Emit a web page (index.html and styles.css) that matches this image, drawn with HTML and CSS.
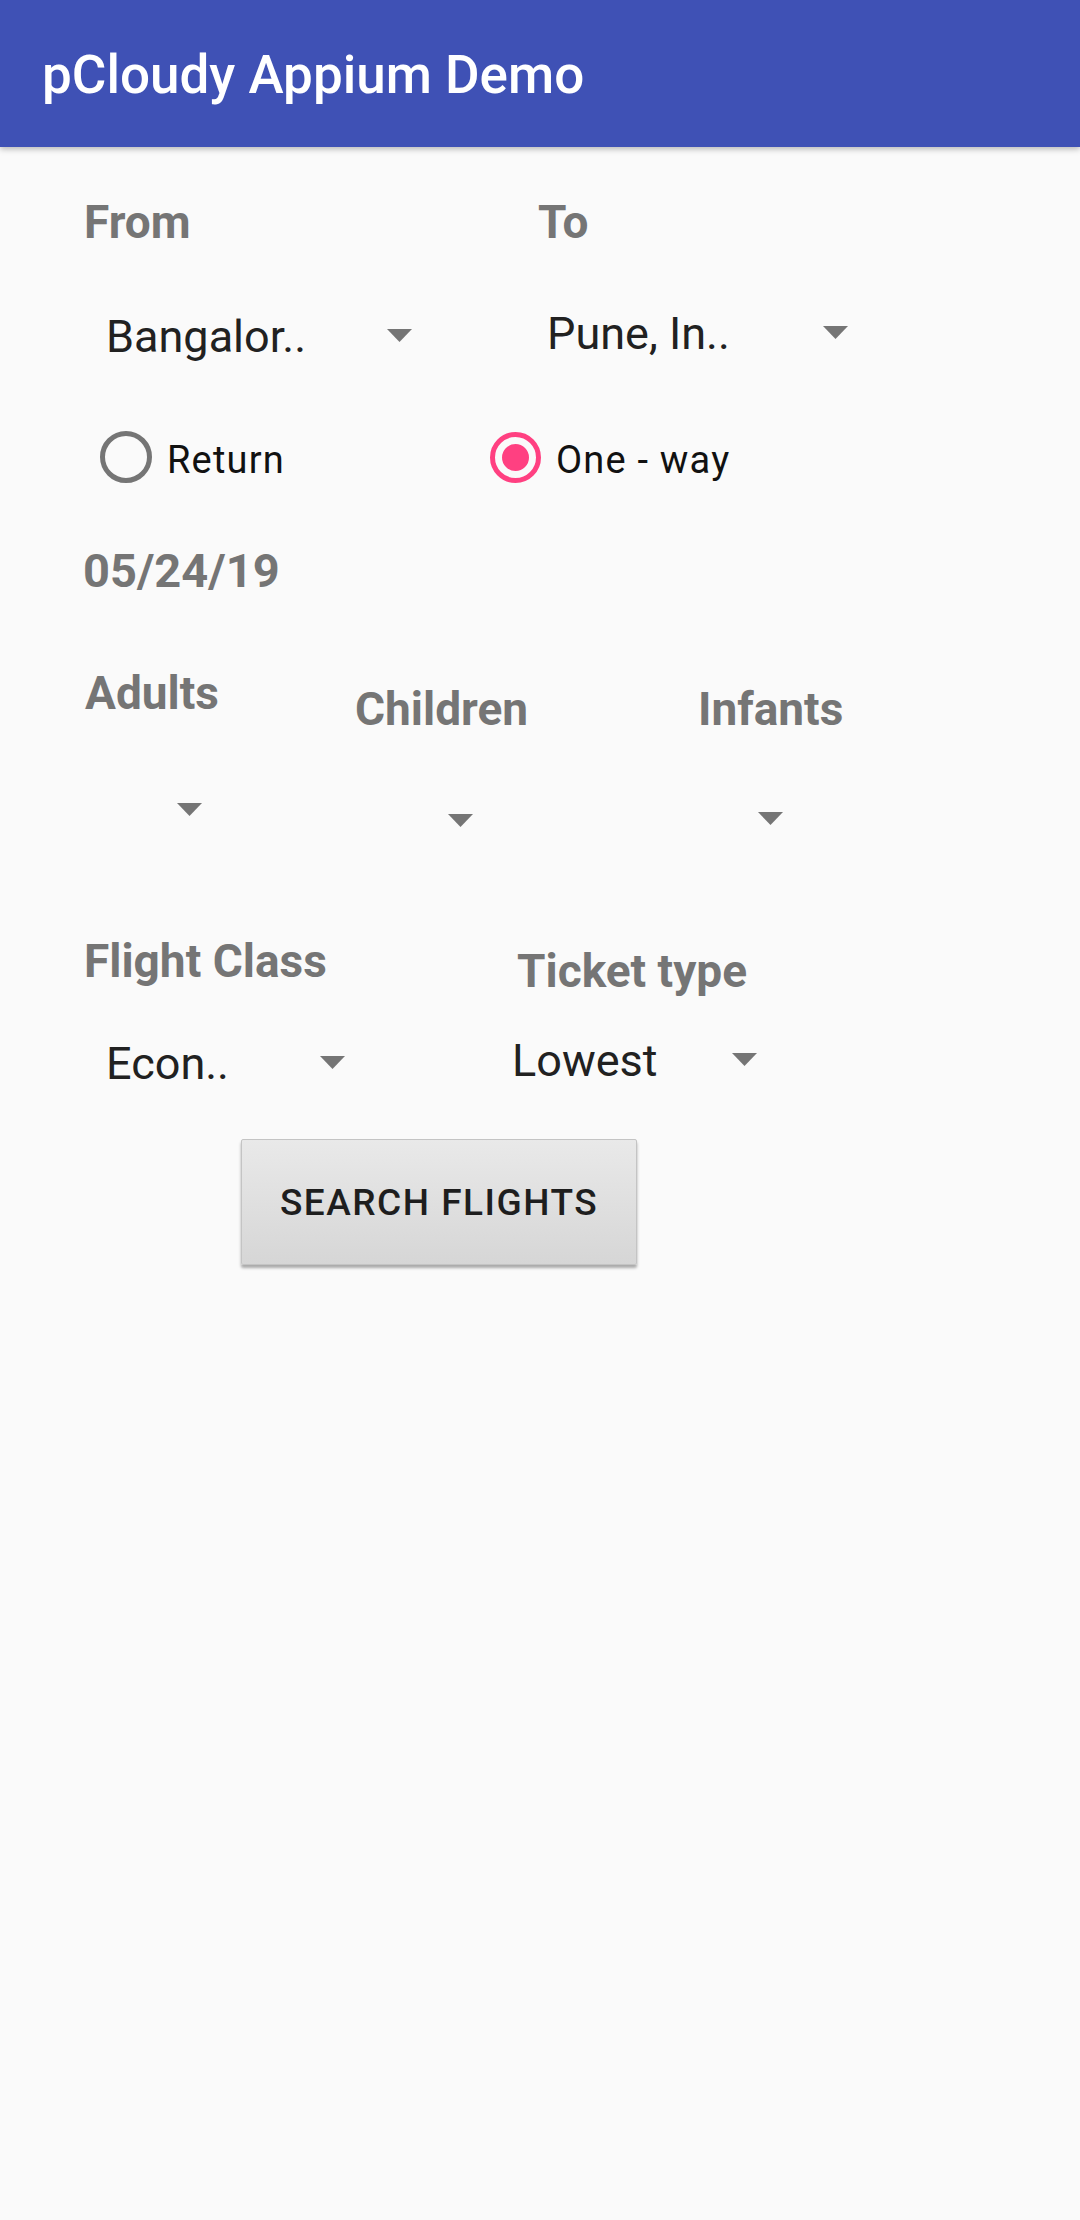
FILE: index.html
```html
<!DOCTYPE html>
<html>
<head>
<meta charset="utf-8">
<link rel="stylesheet" href="styles.css">
</head>
<body>
<div class="appbar"><span class="title">pCloudy Appium Demo</span></div>
<main class="form">
  <div class="row row-labels1">
    <div class="cell c-from label">From</div>
    <div class="cell label">To</div>
  </div>
  <div class="row row-spin1">
    <div class="cell spinner c-bang off3">
      <span class="spin-text w-bang">Bangalor..</span>
      <svg class="arrow" width="25" height="13" viewBox="0 0 25 13"><polygon points="0,0 25,0 12.5,13"/></svg>
    </div>
    <div class="cell spinner">
      <span class="spin-text w-pune">Pune, In..</span>
      <svg class="arrow" width="25" height="13" viewBox="0 0 25 13"><polygon points="0,0 25,0 12.5,13"/></svg>
    </div>
  </div>
  <div class="row row-radio">
    <div class="radio-item c-return">
      <span class="radio"></span>
      <span class="radio-text">Return</span>
    </div>
    <div class="radio-item">
      <span class="radio checked"><span class="dot"></span></span>
      <span class="radio-text">One - way</span>
    </div>
  </div>
  <div class="row row-date">
    <div class="cell label date">05/24/19</div>
  </div>
  <div class="row row-pax">
    <div class="cell label c-adults">Adults</div>
    <div class="cell label c-children off16">Children</div>
    <div class="cell label off16">Infants</div>
  </div>
  <div class="row row-paxspin">
    <div class="cell c-a-arrow"><svg class="arrow-only" width="25" height="13" viewBox="0 0 25 13"><polygon points="0,0 25,0 12.5,13"/></svg></div>
    <div class="cell c-c-arrow off11"><svg class="arrow-only" width="25" height="13" viewBox="0 0 25 13"><polygon points="0,0 25,0 12.5,13"/></svg></div>
    <div class="cell off9"><svg class="arrow-only" width="25" height="13" viewBox="0 0 25 13"><polygon points="0,0 25,0 12.5,13"/></svg></div>
  </div>
  <div class="row row-labels3">
    <div class="cell label c-class">Flight Class</div>
    <div class="cell label off10">Ticket type</div>
  </div>
  <div class="row row-spin2">
    <div class="cell spinner c-econ off3">
      <span class="spin-text w-econ">Econ..</span>
      <svg class="arrow" width="25" height="13" viewBox="0 0 25 13"><polygon points="0,0 25,0 12.5,13"/></svg>
    </div>
    <div class="cell spinner">
      <span class="spin-text w-low">Lowest</span>
      <svg class="arrow" width="25" height="13" viewBox="0 0 25 13"><polygon points="0,0 25,0 12.5,13"/></svg>
    </div>
  </div>
  <div class="row row-button">
    <button class="search-btn">SEARCH FLIGHTS</button>
  </div>
</main>
</body>
</html>
```

FILE: styles.css
```css
* { box-sizing: border-box; }
html, body { margin: 0; padding: 0; }
body {
  width: 1080px;
  height: 2220px;
  background: #fafafa;
  font-family: Roboto, "Noto Sans", sans-serif;
  overflow: hidden;
}
.appbar {
  position: relative;
  height: 147px;
  background: #3f51b5;
  padding: 3px 0 0 42px;
  box-shadow: 0 2px 6px rgba(0,0,0,0.28);
  z-index: 1;
}
.title {
  color: #fff;
  font-size: 53px;
  font-weight: 500;
  line-height: 144px;
  display: block;
}
.form { display: block; }
.row { display: flex; align-items: flex-start; }
.cell { flex: none; }
.label {
  font-size: 46px;
  font-weight: 700;
  color: #757575;
  line-height: 56px;
  white-space: nowrap;
}
.label.date { font-size: 47px; }
.off3 { padding-top: 3px; }
.off9 { padding-top: 9px; }
.off10 { padding-top: 10px; }
.off11 { padding-top: 11px; }
.off16 { padding-top: 16px; }

.row-labels1 { margin-top: 47px; padding-left: 84px; height: 56px; }
.c-from { width: 454px; }

.spinner { display: flex; align-items: flex-start; }
.spin-text {
  font-size: 45px;
  line-height: 56px;
  color: #212121;
  white-space: nowrap;
  flex: none;
}
.arrow { margin-top: 20px; fill: #757575; flex: none; display: block; }
.arrow-only { fill: #757575; display: block; }

.row-spin1 { margin-top: 56px; padding-left: 106px; height: 60px; }
.c-bang { width: 441px; }
.w-bang { width: 281px; }
.w-pune { width: 276px; }

.row-radio { margin-top: 65px; padding-left: 100px; height: 54px; }
.radio-item { display: flex; align-items: flex-start; flex: none; }
.c-return { width: 390px; }
.radio {
  width: 52px;
  height: 52px;
  border-radius: 50%;
  border: 5px solid #757575;
  display: flex;
  align-items: center;
  justify-content: center;
  flex: none;
}
.radio.checked { border-color: #ff4081; margin-top: 1px; width: 51px; height: 51px; }
.dot { width: 27px; height: 27px; border-radius: 50%; background: #ff4081; }
.radio-text {
  font-size: 38px;
  letter-spacing: 1.2px;
  line-height: 52px;
  padding-top: 3px;
  margin-left: 15px;
  color: #111;
  white-space: nowrap;
}

.row-date { margin-top: 58px; padding-left: 83px; height: 56px; }

.row-pax { margin-top: 66px; padding-left: 85px; height: 72px; }
.c-adults { width: 270px; }
.c-children { width: 343px; }

.row-paxspin { margin-top: 66px; padding-left: 177px; height: 25px; }
.c-a-arrow { width: 271px; }
.c-c-arrow { width: 310px; }

.row-labels3 { margin-top: 105px; padding-left: 84px; height: 66px; }
.c-class { width: 433px; }

.row-spin2 { margin-top: 34px; padding-left: 106px; height: 60px; }
.c-econ { width: 406px; }
.w-econ { width: 214px; }
.w-low { width: 220px; }

.row-button { margin-top: 46px; padding-left: 241px; }
.search-btn {
  width: 396px;
  height: 126px;
  border: 1px solid #c4c4c4;
  border-radius: 2px;
  background: linear-gradient(#e9e9e9, #d6d6d6);
  box-shadow: 0 3px 3px rgba(0,0,0,0.32);
  font-family: Roboto, "Noto Sans", sans-serif;
  font-size: 37px;
  font-weight: 500;
  letter-spacing: 1.5px;
  color: #1e1e1e;
  padding: 0;
  line-height: 1;
}
```
